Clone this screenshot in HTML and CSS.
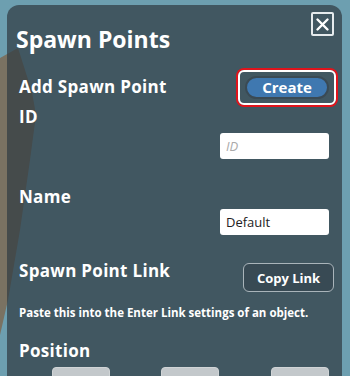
FILE: index.html
```html
<!DOCTYPE html>
<html lang="en">
<head>
    <meta charset="UTF-8">
    <meta name="viewport" content="width=device-width, initial-scale=1.0">
    <title>Spawn Points</title>
    <link rel="stylesheet" href="styles.css">
</head>

<body>
    <!-- rock in the scene behind the panel -->
    <svg class="rock" width="40" height="376" viewBox="0 0 40 376">
        <polygon points="0,58 18,48 32,92 36,115 30,160 20,230 8,300 0,335" fill="#7a7262"/>
    </svg>

    <div class="panel">
        <div class="head">
            <h1 class="title">Spawn Points</h1>
            <button class="close">
                <svg width="15" height="15" viewBox="0 0 15 15">
                    <path d="M2.5 2.5 L12.5 12.5 M12.5 2.5 L2.5 12.5" stroke="#fff" stroke-width="2.4" stroke-linecap="round"/>
                </svg>
            </button>
        </div>

        <div class="row add-row">
            <span class="label">Add Spawn Point</span>
            <div class="highlight">
                <button class="create">Create</button>
            </div>
        </div>

        <div class="label id-label">ID</div>
        <div class="field-row">
            <input class="field" type="text" placeholder="ID">
        </div>

        <div class="label name-label">Name</div>
        <div class="field-row">
            <input class="field" type="text" value="Default">
        </div>

        <div class="row link-row">
            <span class="label">Spawn Point Link</span>
            <button class="copy">Copy Link</button>
        </div>
        <p class="hint">Paste this into the Enter Link settings of an object.</p>

        <div class="label pos-label">Position</div>
        <div class="pos-row">
            <span class="axis axis-x">X</span>
            <input class="pos" type="text" placeholder="X">
            <span class="axis axis-y">Y</span>
            <input class="pos" type="text" placeholder="Y">
            <span class="axis axis-z">Z</span>
            <input class="pos" type="text" placeholder="Z">
        </div>
    </div>
</body>

</html>
```

FILE: styles.css
```css
body {
    margin: 0;
    height: 376px;
    overflow: hidden;
    background-color: #6d9fb0;
    font-family: "Open Sans", Arial, sans-serif;
    color: #fff;
}

.rock {
    position: absolute;
    top: 0;
    left: 0;
}

.panel {
    position: relative;
    margin: 5px 0 0 7px;
    width: 335px;
    height: 400px;
    box-sizing: border-box;
    padding: 0 13px 0 12px;
    border-radius: 12px;
    background-color: rgba(49, 60, 67, 0.72);
}

.head {
    display: flex;
    justify-content: space-between;
    align-items: flex-start;
    height: 62px;
}

.title {
    margin: 20px 0 0 -3px;
    font-size: 23px;
    line-height: 28px;
    font-weight: 700;
}

.close {
    display: flex;
    justify-content: center;
    align-items: center;
    margin: 7px -5px 0 0;
    width: 23px;
    height: 24px;
    padding: 0;
    border: 2px solid #e6ebed;
    border-radius: 2px;
    background: none;
}

.label {
    font-size: 17px;
    font-weight: 700;
    line-height: 20px;
    letter-spacing: 0.3px;
}

.row {
    display: flex;
    justify-content: space-between;
    align-items: center;
}

.add-row {
    height: 40px;
    margin-right: -7px;
}

.highlight {
    padding: 4px 5px;
    border: 2px solid #fff;
    border-radius: 6px;
    box-shadow: 0 0 0 2px #e0141c;
}

.create {
    display: block;
    width: 84px;
    height: 23px;
    padding: 0;
    border: 2px solid #3a4a54;
    border-radius: 12px;
    background-color: #3f78b0;
    color: #fff;
    font-family: inherit;
    font-size: 15px;
    font-weight: 700;
    line-height: 18px;
}

.field-row {
    display: flex;
    justify-content: flex-end;
}

.field {
    width: 109px;
    height: 26px;
    box-sizing: border-box;
    padding: 0 6px;
    border: none;
    border-radius: 3px;
    background: #fff;
    font-family: inherit;
    font-size: 13px;
    color: #222;
}

.field::placeholder {
    color: #aaa;
    font-style: italic;
}

.id-label + .field-row {
    margin-top: 6px;
}

.name-label {
    margin-top: 28px;
}

.name-label + .field-row {
    margin-top: 2px;
}

.link-row {
    align-items: flex-start;
    margin-top: 26px;
    margin-right: -5px;
}

.copy {
    margin-top: 2px;
    width: 91px;
    height: 29px;
    padding: 0;
    border: 1px solid #a9b4ba;
    border-radius: 6px;
    background-color: rgba(40, 52, 60, 0.35);
    color: #fff;
    font-family: inherit;
    font-size: 13px;
    font-weight: 700;
}

.hint {
    margin: 13px 0 0;
    font-size: 11.5px;
    font-weight: 700;
    line-height: 16px;
}

.pos-label {
    margin-top: 20px;
}

.pos-row {
    display: flex;
    align-items: flex-start;
    margin-top: 6px;
}

.axis {
    width: 33px;
    font-size: 14px;
    font-weight: 700;
    line-height: 14px;
    padding-top: 8px;
}

.axis-x { color: #e8131a; }
.axis-y { color: #2fd62f; margin-left: 18px; }
.axis-z { color: #1aa6e8; margin-left: 19px; }

.pos {
    width: 58px;
    height: 26px;
    box-sizing: border-box;
    padding: 0 6px;
    border: 1px solid #d0d4d6;
    border-radius: 4px;
    background: #c3c8cb;
    font-family: inherit;
    font-size: 13px;
}

.pos::placeholder {
    color: #8d9396;
}
```
